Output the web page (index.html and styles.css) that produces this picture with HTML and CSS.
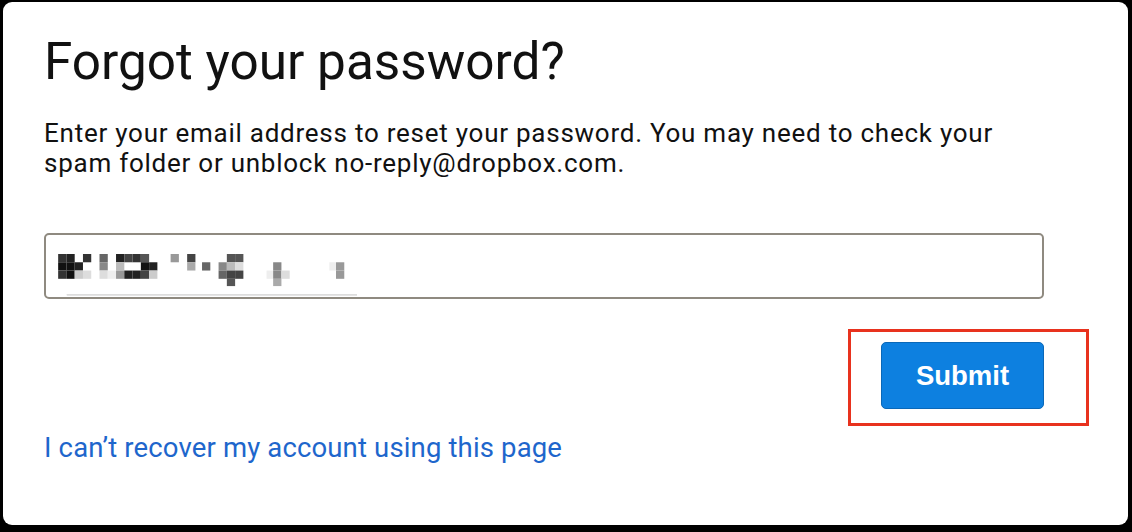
FILE: index.html
```html
<!DOCTYPE html>
<html lang="en">
<head>
    <meta charset="UTF-8" />
    <title>Forgot your password?</title>
    <link rel="stylesheet" href="styles.css">
</head>
<body>

    <div class="card">
        <h1>Forgot your password?</h1>
        <p class="intro">Enter your email address to reset your password. You may need to check your<br>spam folder or unblock no-reply@dropbox.com.</p>

        <div class="email-box">
            <!-- redacted address, drawn as pixel blocks -->
            <svg class="redacted" width="300" height="43" viewBox="80 105 900 130">
                <g>
                    <rect x="80" y="105" width="25" height="25" fill="#333" />
                    <rect x="105" y="105" width="25" height="25" fill="#222" />
                    <rect x="155" y="105" width="25" height="25" fill="#333" />
                    <rect x="205" y="105" width="25" height="25" fill="#666" />
                    <rect x="255" y="105" width="25" height="25" fill="#222" />
                    <rect x="280" y="105" width="25" height="25" fill="#444" />
                    <rect x="305" y="105" width="25" height="25" fill="#333" />
                    <rect x="330" y="105" width="25" height="25" fill="#555" />
                    <rect x="420" y="105" width="25" height="25" fill="#999" />
                    <rect x="470" y="105" width="25" height="25" fill="#444" />
                    <rect x="590" y="105" width="25" height="25" fill="#555" />
                    <rect x="615" y="105" width="25" height="25" fill="#555" />

                    <rect x="80" y="130" width="25" height="25" fill="#111" />
                    <rect x="105" y="130" width="25" height="25" fill="#111" />
                    <rect x="130" y="130" width="25" height="25" fill="#222" />
                    <rect x="205" y="130" width="25" height="25" fill="#888" />
                    <rect x="255" y="130" width="25" height="25" fill="#bbb" />
                    <rect x="330" y="130" width="25" height="25" fill="#111" />
                    <rect x="355" y="130" width="25" height="25" fill="#222" />
                    <rect x="470" y="130" width="25" height="25" fill="#aaa" />
                    <rect x="515" y="130" width="25" height="25" fill="#666" />
                    <rect x="565" y="130" width="25" height="25" fill="#888" />
                    <rect x="590" y="130" width="25" height="25" fill="#bbb" />
                    <rect x="615" y="130" width="25" height="25" fill="#ddd" />
                    <rect x="730" y="130" width="25" height="25" fill="#888" />
                    <rect x="900" y="130" width="20" height="25" fill="#eee" />
                    <rect x="920" y="130" width="25" height="25" fill="#999" />

                    <rect x="80" y="155" width="25" height="25" fill="#333" />
                    <rect x="105" y="155" width="25" height="25" fill="#111" />
                    <rect x="130" y="155" width="25" height="25" fill="#ccc" />
                    <rect x="155" y="155" width="25" height="25" fill="#ddd" />
                    <rect x="205" y="155" width="25" height="25" fill="#ddd" />
                    <rect x="230" y="155" width="25" height="25" fill="#eee" />
                    <rect x="255" y="155" width="25" height="25" fill="#999" />
                    <rect x="280" y="155" width="25" height="25" fill="#222" />
                    <rect x="305" y="155" width="25" height="25" fill="#222" />
                    <rect x="330" y="155" width="25" height="25" fill="#444" />
                    <rect x="355" y="155" width="25" height="25" fill="#ccc" />
                    <rect x="565" y="155" width="25" height="25" fill="#666" />
                    <rect x="590" y="155" width="25" height="25" fill="#444" />
                    <rect x="615" y="155" width="25" height="25" fill="#444" />
                    <rect x="710" y="155" width="20" height="25" fill="#eee" />
                    <rect x="730" y="155" width="25" height="25" fill="#888" />
                    <rect x="755" y="155" width="25" height="25" fill="#ddd" />
                    <rect x="920" y="155" width="25" height="25" fill="#999" />

                    <rect x="590" y="180" width="25" height="22" fill="#555" />
                    <rect x="730" y="180" width="25" height="22" fill="#aaa" />

                    <rect x="105" y="226" width="900" height="5" rx="2.5" fill="#ddd" />
                </g>
            </svg>
        </div>

        <div class="actions">
            <div class="submit-wrap">
                <button type="submit">Submit</button>
                <span class="highlight"></span>
            </div>
        </div>

        <a href="#" class="help-link">I can’t recover my account using this page</a>
    </div>

</body>
</html>
```

FILE: styles.css
```css
body {
    margin: 0;
    background-color: #000;
    font-family: Roboto, "Liberation Sans", sans-serif;
}

.card {
    background-color: white;
    margin: 2px 4px 7px 3px;
    height: 523px;
    box-sizing: border-box;
    border-radius: 9px;
    padding: 30px 84px 0 41px;
    color: #111;
}

h1 {
    font-weight: normal;
    font-size: 51.3px;
    line-height: 60px;
    margin: 0;
}

.intro {
    font-size: 26px;
    letter-spacing: 0.75px;
    line-height: 30px;
    margin: 26px 0 0 0;
}

.email-box {
    margin-top: 55px;
    height: 66px;
    border: 2px solid #8f8a80;
    border-radius: 5px;
    box-sizing: border-box;
    position: relative;
}

    .redacted {
        display: block;
        margin: 19px 0 0 11px;
    }

.actions {
    display: flex;
    justify-content: flex-end;
    margin-top: 43px;
}

.submit-wrap {
    position: relative;
}

button {
    display: block;
    font-family: "Liberation Sans", Arial, sans-serif;
    font-weight: bold;
    font-size: 27.5px;
    color: white;
    background-color: #0d80e0;
    border: 1px solid #0a68b8;
    border-radius: 5px;
    width: 163px;
    height: 67px;
    cursor: pointer;
}

.highlight {
    position: absolute;
    left: -33px;
    right: -45px;
    top: -13px;
    bottom: -17px;
    border: 3px solid #e8321e;
}

.help-link {
    display: block;
    width: max-content;
    margin-top: 22px;
    font-size: 27.5px;
    letter-spacing: 0.15px;
    line-height: 34px;
    color: #1e66cc;
    text-decoration: none;
}
```
